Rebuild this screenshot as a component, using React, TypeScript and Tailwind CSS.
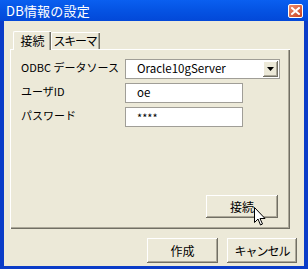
import React from "react";

const font = { fontFamily: '"Noto Sans CJK JP", "Liberation Sans", sans-serif' };

function ClassicButton({ children, className = "" }: { children: React.ReactNode; className?: string }) {
  return (
    <div
      className={
        "flex items-center justify-center bg-[#ECE9D8] text-[12px] text-black whitespace-nowrap shadow-[inset_-1px_-1px_0_#716F64,inset_1px_1px_0_#FFFFFF,inset_-2px_-2px_0_#ACA899] " +
        className
      }
    >
      {children}
    </div>
  );
}

export default function App() {
  return (
    <div className="w-[308px] h-[269px] flex flex-col bg-[#0A3CC8] overflow-hidden select-none" style={font}>
      {/* Title bar */}
      <div className="h-[21px] flex items-center justify-between pl-[6px] pr-[5px] bg-gradient-to-b from-[#0A5FF0] via-[#0553E3] to-[#0348D8]">
        <span className="text-white text-[13px] leading-none tracking-[0.2px]">DB情報の設定</span>
        <div className="w-[15px] h-[14px] rounded-[2px] border border-white bg-gradient-to-br from-[#EB8B6E] to-[#C9411B] flex items-center justify-center">
          <svg width="9" height="8" viewBox="0 0 9 8">
            <path d="M1 1 L8 7 M8 1 L1 7" stroke="white" strokeWidth="2" strokeLinecap="square" />
          </svg>
        </div>
      </div>
      {/* Body */}
      <div className="flex-1 mx-[4px] mb-[3px] bg-[#ECE9D8] flex flex-col pl-[6px] pr-[10px] pt-[9px] relative">
        {/* Tabs */}
        <div className="flex items-end h-[19px] text-[12px] text-black whitespace-nowrap">
          <div className="h-[19px] w-[38px] ml-[3px] flex items-center justify-center border-t border-l border-white shadow-[inset_-1px_0_0_#716F64,inset_-2px_0_0_#ACA899] rounded-tl-[2px] bg-[#ECE9D8] relative z-10 -mb-px pb-[1px]">
            接続
          </div>
          <div className="h-[17px] w-[49px] flex items-center justify-center border-t border-l border-white shadow-[inset_-1px_0_0_#716F64,inset_-2px_0_0_#ACA899] rounded-tl-[2px] tracking-[-1.2px] pr-[2px]">
            スキーマ
          </div>
        </div>
        {/* Panel */}
        <div className="w-[280px] h-[180px] border-t border-l border-white shadow-[inset_-1px_-1px_0_#716F64,inset_-2px_-2px_0_#ACA899] flex flex-col px-[10px] pt-[9px] text-[12px] text-black">
          <div className="flex items-center h-[20px]">
            <span className="w-[104px] shrink-0 whitespace-nowrap text-[11px] pb-[3px]">ODBC データソース</span>
            <div className="w-[159px] h-[20px] border border-[#A09E97] bg-white flex items-center justify-between pl-[11px] pr-[1px]">
              <span className="text-[11.5px]">Oracle10gServer</span>
              <ClassicButton className="w-[15px] h-[16px]">
                <svg width="7" height="4" viewBox="0 0 7 4">
                  <path d="M0 0 H7 L3.5 4 Z" fill="black" />
                </svg>
              </ClassicButton>
            </div>
          </div>
          <div className="flex items-center h-[20px] mt-[4px]">
            <span className="w-[104px] shrink-0 whitespace-nowrap text-[11px] pb-[3px]">ユーザID</span>
            <div className="w-[118px] h-[20px] border border-[#A09E97] bg-white flex items-center pl-[11px] text-[11.5px]">oe</div>
          </div>
          <div className="flex items-center h-[20px] mt-[4px]">
            <span className="w-[104px] shrink-0 whitespace-nowrap text-[11px] pb-[3px]">パスワード</span>
            <div className="w-[118px] h-[20px] border border-[#A09E97] bg-white flex items-center pl-[11px] text-[11px]">****</div>
          </div>
          <div className="flex-1" />
          <div className="flex justify-end pr-[2px] pb-[11px]">
            <ClassicButton className="w-[72px] h-[23px]">接続</ClassicButton>
          </div>
        </div>
        {/* Bottom buttons */}
        <div className="flex justify-end gap-[9px] mt-[9px] -mr-[3px]">
          <ClassicButton className="w-[71px] h-[25px]">作成</ClassicButton>
          <ClassicButton className="w-[70px] h-[25px] tracking-[-1px]">キャンセル</ClassicButton>
        </div>
        {/* Mouse cursor */}
        <svg className="absolute left-[250px] top-[186px]" width="12" height="19" viewBox="0 0 12 19">
          <path d="M0.5 0.5 V15.5 L4 12 L6.5 18 L8.5 17 L6 11.5 H11 Z" fill="white" stroke="black" strokeWidth="1" />
        </svg>
      </div>
    </div>
  );
}
